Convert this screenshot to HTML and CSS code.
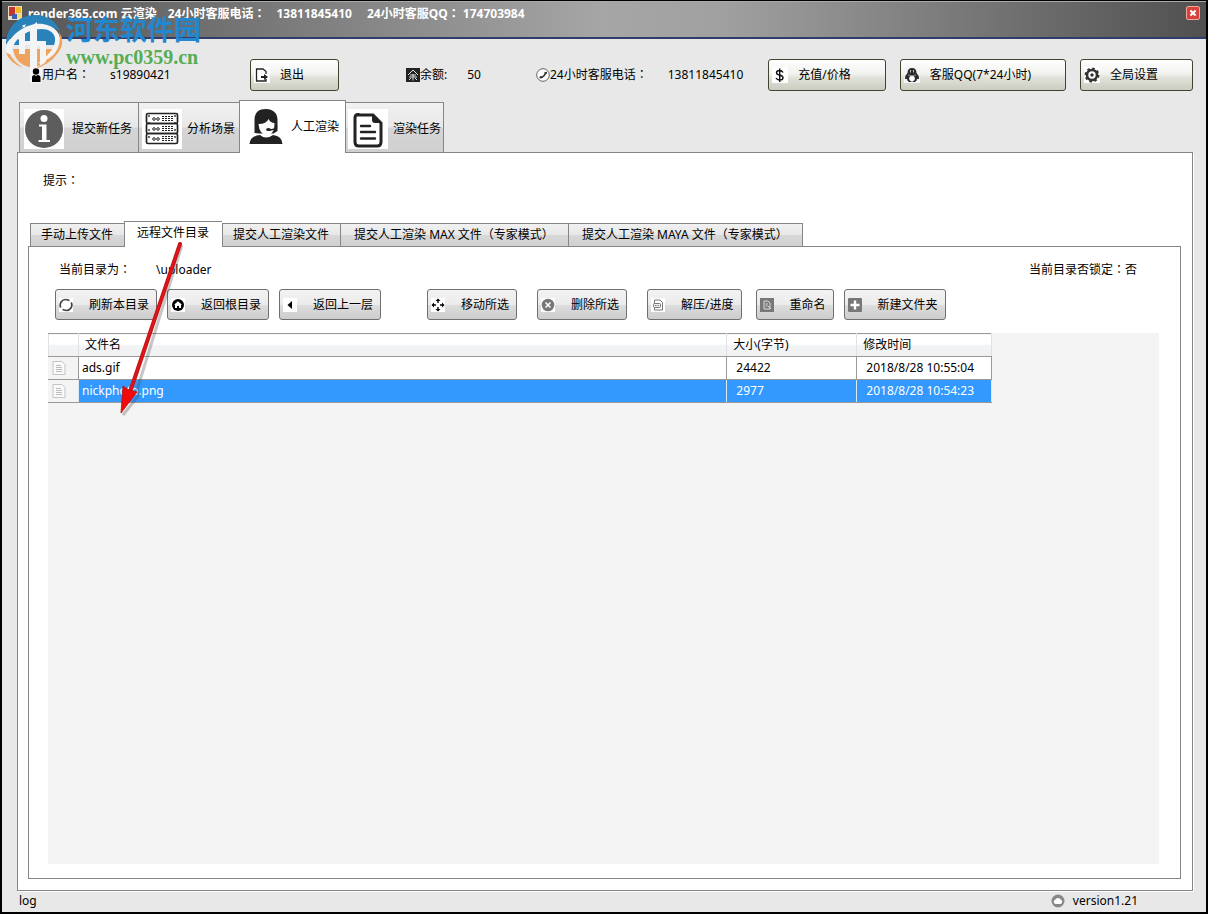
FILE: index.html
```html
<!DOCTYPE html>
<html lang="zh-CN">
<head>
<meta charset="utf-8">
<meta name="viewport" content="width=device-width, initial-scale=1">
<title>render365.com 云渲染</title>
<link rel="stylesheet" href="styles.css">
</head>
<body>
<div class="window">
  <header class="titlebar">
    <svg class="app-icon" viewBox="0 0 14 14"><rect width="14" height="14" fill="#e8dcc8"/><rect x="1" y="1" width="6" height="9" fill="#c8342c"/><rect x="8" y="1" width="5" height="6" fill="#f3b928"/><rect x="4" y="8" width="5" height="5" fill="#3c62b4"/><rect x="9" y="8" width="4" height="4" fill="#f6dc70"/></svg>
    <h1 class="title"><span>render365.com 云渲染</span><span>24小时客服电话<i class="colon" lang="zh-TW">：</i></span><span class="title-phone">13811845410</span><span>24小时客服QQ<i class="colon" lang="zh-TW">：</i> 174703984</span></h1>
    <button class="close" aria-label="关闭"><svg viewBox="0 0 14 14"><path d="M4 4l6 6M10 4l-6 6" stroke="#fff" stroke-width="2.4"/></svg></button>
  </header>

  <section class="account">
    <div class="field"><svg class="icon-s" viewBox="0 0 12 16"><rect width="12" height="16" fill="#f6f6f6"/><circle cx="6" cy="4.5" r="3.2"/><path d="M2 15V10.500Q2 8 4.500 8L6 9 7.500 8Q10.500 8 10.500 10.500V15z"/></svg><span>用户名<i class="colon" lang="zh-TW">：</i></span><span class="value">s19890421</span></div>
    <div><button class="btn-main"><svg viewBox="0 0 16 16"><rect width="16" height="16" fill="#fff"/><path d="M12 7V4.500L9 2H2.500v12H12v-2" fill="none" stroke="#222" stroke-width="1.300"/><path d="M7 9h3V7l4 3-4 3v-2H7z" fill="#222"/></svg>退出</button></div>
    <div class="field"><svg class="icon-m" viewBox="0 0 14 14"><rect width="14" height="14" fill="#222"/><path d="M2 7l5-5 5 5M4 7h6M3 9h8M7 6v6.500M5 10l-2 2M9 10l2 2" fill="none" stroke="#ddd"/></svg><span>余额:</span><span class="value">50</span></div>
    <div class="field"><svg class="icon-m" viewBox="0 0 14 14"><circle cx="7" cy="7" r="6.300" fill="#fff" stroke="#555" stroke-width=".9"/><path d="M3.500 9.500Q8 10 10 4" fill="none" stroke="#333" stroke-width="1.600"/><path d="M4 9l2 .5M9.500 4l.5 2" stroke="#333" stroke-width="2.200"/></svg><span>24小时客服电话<i class="colon" lang="zh-TW">：</i></span><span class="value">13811845410</span></div>
    <div class="account-actions">
      <button class="btn-main"><svg viewBox="0 0 16 16"><rect width="16" height="16" fill="#fff"/><path d="M11 5.500Q10 3.500 7.500 3.500 4.500 3.500 4.500 5.700 4.500 7.500 7.500 8 11 8.700 11 10.700 11 13 7.800 13 5 13 4 11M7.700 1.500v13.500" fill="none" stroke="#111" stroke-width="1.400"/></svg>充值/价格</button>
      <button class="btn-main"><svg viewBox="0 0 16 16"><rect width="16" height="16" fill="#f4f4f4"/><path d="M8 1Q3.500 1 3.500 6 1 8 1 12L3 12Q3 14 5 15H7L8 14 9 15H11Q13 14 13 12L15 12Q15 8 12.500 6 12.500 1 8 1z" fill="#2c2c2c"/><ellipse cx="8" cy="11.500" rx="2.800" ry="2.800" fill="#fff"/><path d="M4 8q4 1.500 8 0" stroke="#888" fill="none"/><path d="M6.500 3v2.500M9.500 3v2.500" stroke="#bbb"/></svg>客服QQ(7*24小时)</button>
      <button class="btn-main"><svg viewBox="0 0 16 16"><rect width="16" height="16" fill="#fff"/><circle cx="8" cy="8" r="5" fill="none" stroke="#333" stroke-width="2.600"/><circle cx="8" cy="8" r="6.600" fill="none" stroke="#333" stroke-width="1.800" stroke-dasharray="2.600 2.584"/><circle cx="8" cy="8" r="1.700" fill="#333"/></svg>全局设置</button>
    </div>
  </section>

  <main class="workspace">
    <nav class="tabs">
      <button class="tab tab-first"><svg viewBox="0 0 40 40"><rect width="40" height="40" fill="#fff"/><circle cx="20" cy="20" r="19" fill="#5d5d5d"/><circle cx="20" cy="9.500" r="3.500" fill="#fff"/><path d="M15 15.500h7.500V31H26v2H14.500v-2H18V17.500h-3z" fill="#fff"/></svg>提交新任务</button>
      <button class="tab"><svg viewBox="0 0 40 40"><rect width="40" height="40" fill="#fff"/><g fill="none" stroke="#222" stroke-width="1.700"><rect x="4.500" y="4.500" width="31" height="10" rx="1.500"/><rect x="4.500" y="14.500" width="31" height="10" rx="1.500"/><rect x="4.500" y="24.500" width="31" height="10" rx="1.500"/></g><g fill="none" stroke="#222"><path d="M7 6v27M33 6v27" stroke-width="1.300" stroke-dasharray="2 5"/><circle cx="12" cy="10" r="1.300"/><circle cx="16" cy="10" r="1.300"/><circle cx="12" cy="20" r="1.300"/><circle cx="16" cy="20" r="1.300"/><circle cx="12" cy="30" r="1.300"/><circle cx="16" cy="30" r="1.300"/><path d="M20 7.500h11M20 9.500h11M20 11.500h11M20 17.500h11M20 19.500h11M20 21.500h11M20 27.500h11M20 29.500h11M20 31.500h11" stroke-dasharray="2 1"/></g></svg>分析场景</button>
      <button class="tab tab-active" aria-current="page"><svg viewBox="0 0 40 40"><path d="M8.500 26V13C8.500 5 13 2 20 2s11.500 4 11.500 11v11l-4 2.500H13z" fill="#222"/><path d="M12.500 17q8 0 10-5 2 4 6 4 0 12-7.500 12T12.500 17z" fill="#fff"/><path d="M31 19Q29 23 23 23" fill="none" stroke="#222" stroke-width="1.500"/><ellipse cx="22.500" cy="22.500" rx="2.500" ry="1.600" fill="#222"/><path d="M3.500 37Q4 29 14 28q6 5 13 0 9 1 9.500 9z" fill="#222"/></svg>人工渲染</button>
      <button class="tab tab-last"><svg viewBox="0 0 40 40"><rect width="40" height="40" fill="#fff"/><path d="M10 6H25L33 14V33Q33 37 29 37H11Q7 37 7 33V9Q7 5.500 10 5.500z" fill="none" stroke="#222" stroke-width="3"/><path d="M24 5l9 9h-6q-3 0-3-3z" fill="#222"/><path d="M13 17h9M13 23h14M13 29.500h14" stroke="#222" stroke-width="2.400" stroke-linecap="round"/></svg>渲染任务</button>
    </nav>

    <section class="panel">
      <p class="hint">提示<i class="colon" lang="zh-TW">：</i></p>
      <nav class="subtabs">
        <button class="subtab">手动上传文件</button>
        <button class="subtab subtab-active" aria-current="page">远程文件目录</button>
        <button class="subtab">提交人工渲染文件</button>
        <button class="subtab subtab-wide">提交人工渲染 MAX 文件（专家模式）</button>
        <button class="subtab subtab-wide">提交人工渲染 MAYA 文件（专家模式）</button>
      </nav>
      <section class="subpanel">
        <div class="path-row">
          <p><span>当前目录为<i class="colon" lang="zh-TW">：</i></span><span class="path">\uploader</span></p>
          <p>当前目录否锁定<i class="colon" lang="zh-TW">：</i>否</p>
        </div>
        <div class="toolbar">
          <div class="tool-group group-nav">
            <button class="tool"><svg viewBox="0 0 14 14"><rect width="14" height="14" fill="#fff"/><path d="M1.800 9.500A5.500 5.500 0 0 1 7 1.500M12.200 4.500A5.500 5.500 0 0 1 7 12.500M7 1.500l3.500 1M7 12.500l-3.500-1" fill="none" stroke="#444" stroke-width="1.700"/></svg>刷新本目录</button>
            <button class="tool"><svg viewBox="0 0 14 14"><rect width="14" height="14" fill="#fff"/><circle cx="7" cy="7" r="6"/><path d="M7 3.200l4 3.500H10V10H8V8H6v2H4V6.700H3z" fill="#fff"/></svg>返回根目录</button>
            <button class="tool"><svg viewBox="0 0 14 14"><rect width="14" height="14" fill="#fff"/><path d="M9 3v8L4.500 7z"/></svg>返回上一层</button>
          </div>
          <div class="tool-group group-selection">
            <button class="tool"><svg viewBox="0 0 14 14"><rect width="14" height="14" fill="#fff"/><path d="M7 .5l2.500 2.500h-5zM7 13.500l2.500-2.500h-5zM.5 7L3 4.500v5zM13.500 7L11 4.500v5zM6.300 3h1.400v2H6.300zM6.300 9h1.400v2H6.300zM3 6.300h2v1.400H3zM9 6.300h2v1.400H9z"/></svg>移动所选</button>
            <button class="tool"><svg viewBox="0 0 14 14"><rect width="14" height="14" fill="#fff"/><circle cx="7" cy="7" r="6.300" fill="#777"/><path d="M4.500 4.500l5 5M9.500 4.500l-5 5" stroke="#fff" stroke-width="1.500"/></svg>删除所选</button>
            <button class="tool"><svg viewBox="0 0 14 14"><rect width="14" height="14" fill="#fff"/><path d="M3.500 5.500V2H9l2.500 2.500V12H3.500v-2" fill="none" stroke="#777"/><rect x="2.500" y="5.500" width="7" height="4" rx="1" fill="#eee" stroke="#777"/><path d="M4 7.500h4" stroke="#777" stroke-dasharray="1 .6"/></svg>解压/进度</button>
          </div>
          <div class="tool-group group-edit">
            <button class="tool"><svg viewBox="0 0 14 14"><rect width="14" height="14" fill="#777"/><path d="M4 3h4l2 2v6H4z" fill="none" stroke="#ddd"/><path d="M5.500 6h2.500M5.500 8h2M8 8l3 3" stroke="#ddd"/></svg>重命名</button>
            <button class="tool"><svg viewBox="0 0 14 14"><rect width="14" height="14" rx="1" fill="#777"/><path d="M7 2.500v9M2.500 7h9" stroke="#fff" stroke-width="2.400"/></svg>新建文件夹</button>
          </div>
        </div>
        <div class="grid-area">
          <table class="files">
            <colgroup><col class="col-icon"><col><col class="col-size"><col class="col-time"></colgroup>
            <thead><tr><th></th><th>文件名</th><th>大小(字节)</th><th>修改时间</th></tr></thead>
            <tbody>
              <tr><td class="cell-icon"><svg viewBox="0 0 14 14"><path d="M1 .5h9l3 3v10H1z" fill="#fafafa" stroke="#c4c4c4"/><path d="M4 4.500h5M4 6.500h6M4 8.500h6M4 10.500h6" stroke="#bbb"/></svg></td><td>ads.gif</td><td>24422</td><td>2018/8/28 10:55:04</td></tr>
              <tr class="selected"><td class="cell-icon"><svg viewBox="0 0 14 14"><path d="M1 .5h9l3 3v10H1z" fill="#fafafa" stroke="#c4c4c4"/><path d="M4 4.500h5M4 6.500h6M4 8.500h6M4 10.500h6" stroke="#bbb"/></svg></td><td>nickphoto.png</td><td>2977</td><td>2018/8/28 10:54:23</td></tr>
            </tbody>
          </table>
        </div>
      </section>
    </section>
  </main>

  <footer class="status">
    <span>log</span>
    <span class="version"><svg viewBox="0 0 14 14"><circle cx="7" cy="7" r="6.500" fill="#888"/><path d="M4.500 10a2.200 2.200 0 0 1-.3-4.200 3 3 0 0 1 5.600 0 2.200 2.200 0 0 1-.3 4.200z" fill="#fff"/></svg>version1.21</span>
  </footer>
</div>

<div class="watermark">
  <svg class="mark" viewBox="0 0 58 54">
    <path d="M1 30C1 12 14 0 30 0 42 0 51 6 55 16 40 6 24 8 12 18 6 22 3 26 1 30z" fill="#2a82bb"/>
    <path d="M7 36C8 24 18 14 32 13 42 12 50 15 51 23V30H7z" fill="#2a82bb"/>
    <path d="M8 34H51Q46 48 30 52H24Q10 48 8 34z" fill="#efa35e"/>
    <path d="M1 31C8 17 24 7 38 9 50 11 57 19 55 29 53 38 44 45 32 49 44 40 51 32 50 23 48 13 35 12 23 17 12 22 5 31 8 42 3 39 0 36 1 31z" fill="#f3f4f6"/>
    <path d="M12 23l8-6v22h-6V25zM25 12l7-5v46h-7V30h-5v-4h5zM32 26h9v24l-6 3V31h-3z" fill="#f3f4f6"/>
    <path d="M54 17Q61 27 53 38 44 50 30 54 48 44 53 33 56 24 54 17zM1 38Q5 48 18 53 8 46 5 39z" fill="#efa35e"/>
    <path d="M18 8l1 2 2-1-1 2 1 2-2-1-2 1 1-2-1-1h2z" fill="#f3f4f6"/>
  </svg>
  <div><p class="mark-name">河东软件园</p><p class="mark-url">www.pc0359.cn</p></div>
</div>
<svg class="arrow" viewBox="0 0 80 180" aria-hidden="true"><path d="M68 5L23 150l2 5L9 175" fill="none" stroke="#444" stroke-width="3" opacity=".3"/><path d="M66 4L16 152" stroke="#c41418" stroke-width="4" stroke-linecap="round"/><path d="M66 4L16 152" stroke="#e01418" stroke-width="2"/><path d="M7 173l2-27 6 4 8 2z" fill="#f00a0a" stroke="#c00a0a" stroke-width=".8"/></svg>
</body>
</html>
```
FILE: styles.css
```css
* { box-sizing: border-box; }
body {
  margin: 0;
  font: 12px/16px "Noto Sans", "Noto Sans CJK SC", sans-serif;
  color: #000;
}
p, h1 { margin: 0; }
button { font: inherit; color: inherit; margin: 0; white-space: nowrap; cursor: pointer; }
svg { flex: none; display: block; }
.colon { font-family: "Noto Sans CJK TC", sans-serif; font-style: normal; line-height: 1; }

.window {
  min-height: 100vh;
  display: flex;
  flex-direction: column;
  background: #e8e8e8;
  border: 2px solid #000;
  border-top-width: 1px;
}

.titlebar {
  height: 38px;
  display: flex;
  align-items: flex-start;
  padding: 4px 6px 0;
  border-top: 1px solid #aaa;
  border-bottom: 2px solid #303c6c;
  background: linear-gradient(90deg, #545454 0%, #a6a6a6 50%, #a0a0a0 60%, #505050 100%);
  color: #fff;
}
.app-icon { width: 14px; height: 14px; }
.title {
  flex: 1;
  display: flex;
  gap: 11px;
  padding-left: 6px;
  font-size: 12px;
  line-height: 16px;
  font-weight: 700;
  white-space: pre;
}
.title-phone { margin-right: 4px; }
.close {
  width: 14px;
  height: 14px;
  padding: 0;
  border: 1px solid #f2a79d;
  border-radius: 2px;
  background: #d4433c;
}
.close svg { width: 12px; height: 12px; }

.account {
  display: grid;
  grid-template-columns: 220px 156px 130px 1fr auto;
  align-items: center;
  padding: 20px 13px 0 28px;
}
.field { display: flex; align-items: center; white-space: nowrap; }
.value { margin-left: 20px; }
.icon-s { width: 12px; height: 16px; }
.icon-m { width: 14px; height: 14px; }
.account-actions { display: flex; gap: 14px; }
.btn-main {
  height: 32px;
  display: flex;
  align-items: center;
  gap: 10px;
  padding: 0 34px 0 3px;
  border: 1px solid #45432f;
  border-radius: 3px;
  background: linear-gradient(#fefefe 0%, #f2f3ef 45%, #dfe1d9 60%, #cccdc0 100%);
}
.btn-main svg { width: 16px; height: 16px; }

.workspace { flex: 1; display: flex; flex-direction: column; padding: 9px 13px 0 15px; }
.tabs { display: flex; align-items: flex-end; padding-left: 2px; }
.tab {
  height: 50px;
  display: flex;
  align-items: center;
  gap: 5px;
  padding: 2px 4px 0 3px;
  border: 1px solid #858688;
  border-bottom: 0;
  border-right: 0;
  background: linear-gradient(#f1f1f1 0%, #e8e8e8 48%, #d5d5d5 52%, #d0d0d0 100%);
}
.tab svg { width: 40px; height: 40px; }
.tab-first { gap: 8px; padding: 2px 6px 0 4px; }
.tab-active {
  z-index: 1;
  height: 53px;
  margin-bottom: -1px;
  padding: 0 6px 0 6px;
  border-right: 1px solid #858688;
  background: #fff;
}
.tab-last { padding: 2px 2px 0; border-left: 0; border-right: 1px solid #858688; }

.panel {
  flex: 1;
  display: flex;
  flex-direction: column;
  padding: 20px 11px 11px 10px;
  border: 1px solid #858688;
  box-shadow: 1px 1px 0 #fff;
  background: #fff;
}
.hint { padding-left: 15px; }
.subtabs { display: flex; align-items: flex-end; padding: 32px 0 0 2px; }
.subtab {
  height: 23px;
  padding: 0 11px 0 10px;
  border: 1px solid #858688;
  border-width: 1px 0 0 1px;
  background: linear-gradient(#f1f1f1 0%, #e8e8e8 48%, #d8d8d8 52%, #d0d0d0 100%);
}
.subtab:last-child { border-right-width: 1px; }
.subtab-active {
  z-index: 1;
  height: 26px;
  margin-bottom: -1px;
  padding: 0 13px 4px 12px;
  background: #fff;
}
.subtab-wide { padding: 0 14px 0 13px; }

.subpanel {
  flex: 1;
  display: flex;
  flex-direction: column;
  padding: 15px 21px 14px 19px;
  border: 1px solid #858688;
}
.path-row { display: flex; justify-content: space-between; padding: 0 22px 0 11px; }
.path { margin-left: 25px; }
.toolbar { display: flex; flex-wrap: wrap; padding: 11px 0 13px 7px; }
.tool-group { display: flex; }
.group-nav { gap: 10px; margin-right: 46px; }
.group-selection { gap: 20px; margin-right: 14px; }
.group-edit { gap: 10px; }
.tool {
  height: 31px;
  display: flex;
  align-items: center;
  gap: 16px;
  padding: 0 7px 0 3px;
  border: 1px solid #707070;
  border-radius: 3px;
  background: linear-gradient(#f3f3f3 0%, #ebebeb 50%, #dddddd 51%, #cdcdcd 100%);
}
.tool svg { width: 14px; height: 14px; }

.grid-area { flex: 1; background: #f4f4f4; }
.files {
  width: 85%;
  table-layout: fixed;
  border-collapse: collapse;
  text-align: left;
}
.col-icon { width: 30px; }
.col-size { width: 130px; }
.col-time { width: 135px; }
.files th {
  height: 23px;
  padding: 0 6px;
  font-weight: 400;
  border: 1px solid #dfe1e4;
  border-top-color: #999;
  border-bottom-color: #999;
  background: linear-gradient(#fff 0%, #fff 45%, #f2f3f5 50%, #eff1f3 100%);
}
.files td {
  height: 23px;
  padding: 0 3px;
  border: 1px solid #999;
  background: #fff;
}
.files td:nth-child(n+3) { padding: 0 9px; }
.files .selected td { background: #3399ff; border-right-color: #dce8f4; color: #fff; }
.files td.cell-icon, .files .selected td.cell-icon { background: #f4f4f4; border-left-color: #f4f4f4; }
.cell-icon svg { width: 14px; height: 14px; }

.status {
  display: flex;
  justify-content: space-between;
  padding: 2px 68px 3px 17px;
}
.version { display: flex; align-items: center; gap: 8px; }
.version svg { width: 14px; height: 14px; }

.watermark {
  position: absolute;
  left: 5px;
  top: 15px;
  z-index: 2;
  display: flex;
  gap: 3px;
  pointer-events: none;
}
.mark { width: 58px; height: 54px; }
.mark-name {
  font: 700 27px/28px "Noto Sans CJK SC", sans-serif;
  color: #2187d0;
}
.mark-url {
  font: 700 20px/28px "Liberation Serif", serif;
  color: #55ad56;
}
.arrow {
  position: absolute;
  left: 114px;
  top: 240px;
  z-index: 2;
  width: 80px;
  height: 180px;
  pointer-events: none;
}
```
